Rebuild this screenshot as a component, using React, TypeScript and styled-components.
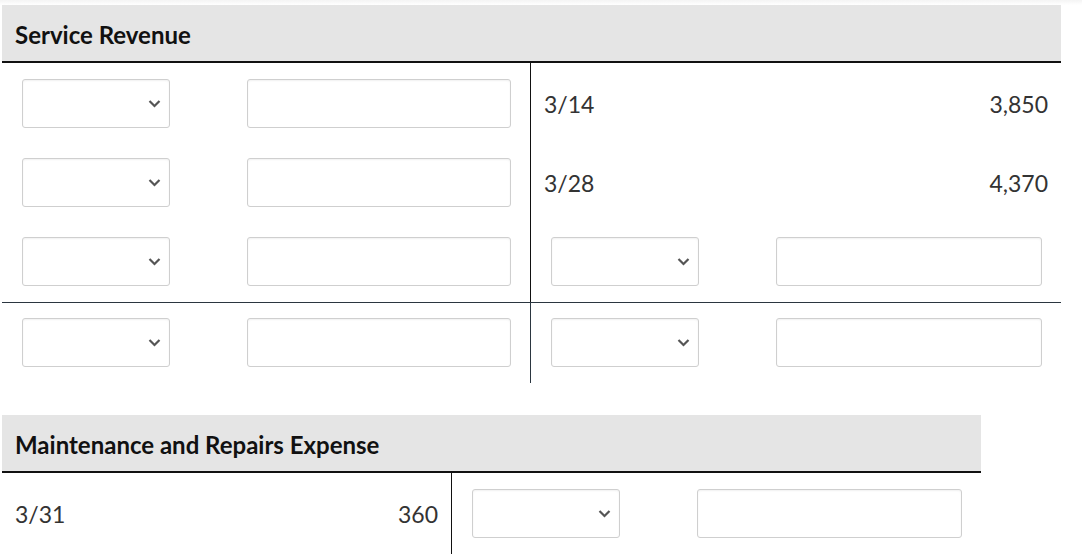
import React from "react";
import styled, { createGlobalStyle } from "styled-components";

const GlobalStyle = createGlobalStyle`
  html, body { margin: 0; padding: 0; background: #ffffff; }
  body { font-family: Lato, "Liberation Sans", sans-serif; }
  * { box-sizing: border-box; }
`;

const Page = styled.div`
  padding: 5px 0 0 2px;
  display: flex;
  flex-direction: column;
  gap: 32px;
  background: linear-gradient(#f4f4f4 0, #ffffff 5px);
`;

const Account = styled.section<{ $left: number; $right: number }>`
  display: grid;
  grid-template-columns: ${(p) => p.$left}px ${(p) => p.$right}px;
  width: ${(p) => p.$left + p.$right}px;
`;

const Header = styled.div`
  grid-column: 1 / -1;
  height: 58px;
  background: #e5e5e5;
  border-bottom: 2px solid #111;
  display: flex;
  align-items: center;
  padding: 3px 0 0 13px;
  font-size: 24px;
  font-weight: 700;
  color: #111;
`;

const Side = styled.div<{ $divider?: boolean; $dark?: boolean; $top?: number }>`
  display: flex;
  flex-direction: column;
  gap: 30px;
  padding: ${(p) => p.$top ?? 16}px 0 16px;
  border-right: ${(p) => (p.$divider ? `1px solid ${p.$dark ? "#2b3640" : "#111"}` : "none")};
`;

const Rule = styled.div`
  grid-column: 1 / -1;
  height: 1px;
  background: #2b3640;
`;

const EntryRow = styled.div`
  display: flex;
  align-items: center;
  height: 49px;
  padding: 0 19px 0 20px;
  gap: 77px;
`;

const TextRow = styled.div`
  display: flex;
  align-items: center;
  justify-content: space-between;
  height: 49px;
  padding: 0 13px 0 13px;
  font-size: 23px;
  color: #333;
`;

const SelectWrap = styled.div`
  position: relative;
  width: 148px;
  height: 49px;
  flex: none;
`;

const Select = styled.select`
  appearance: none;
  width: 100%;
  height: 100%;
  border: 1px solid #cfcfcf;
  border-radius: 3px;
  background: #fff;
  box-shadow: inset 0 1px 2px rgba(0, 0, 0, 0.06);
  font-family: inherit;
  font-size: 18px;
`;

const Chevron = styled.svg`
  position: absolute;
  right: 9px;
  top: 20px;
  width: 13px;
  height: 9px;
  pointer-events: none;
`;

const TextInput = styled.input`
  flex: 1;
  min-width: 0;
  height: 49px;
  border: 1px solid #cfcfcf;
  border-radius: 3px;
  background: #fff;
  box-shadow: inset 0 1px 2px rgba(0, 0, 0, 0.06);
  font-family: inherit;
  font-size: 18px;
`;

const Entry = () => (
  <EntryRow>
    <SelectWrap>
      <Select defaultValue="">
        <option value=""></option>
      </Select>
      <Chevron viewBox="0 0 13 9">
        <path d="M1.5 2 L6.5 7 L11.5 2" fill="none" stroke="#555" strokeWidth="2.2" />
      </Chevron>
    </SelectWrap>
    <TextInput type="text" />
  </EntryRow>
);

const Posted = ({ date, amount }: { date: string; amount: string }) => (
  <TextRow>
    <span>{date}</span>
    <span>{amount}</span>
  </TextRow>
);

export default function App() {
  return (
    <>
      <GlobalStyle />
      <Page>
        <Account $left={529} $right={530}>
          <Header>Service Revenue</Header>
          <Side $divider>
            <Entry />
            <Entry />
            <Entry />
          </Side>
          <Side>
            <Posted date="3/14" amount="3,850" />
            <Posted date="3/28" amount="4,370" />
            <Entry />
          </Side>
          <Rule />
          <Side $divider $dark $top={15}>
            <Entry />
          </Side>
          <Side $top={15}>
            <Entry />
          </Side>
        </Account>
        <Account $left={450} $right={529}>
          <Header>Maintenance and Repairs Expense</Header>
          <Side $divider>
            <Posted date="3/31" amount="360" />
          </Side>
          <Side>
            <Entry />
          </Side>
        </Account>
      </Page>
    </>
  );
}
